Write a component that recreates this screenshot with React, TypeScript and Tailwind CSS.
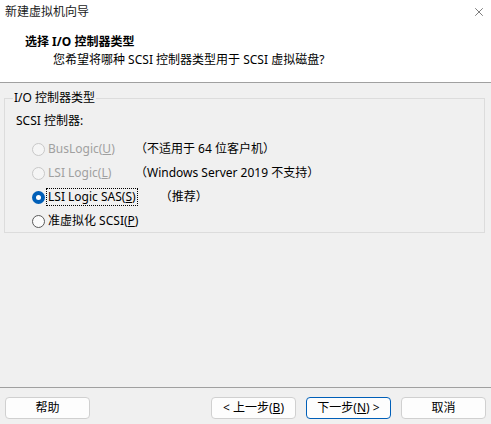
import { X } from 'lucide-react';

const font = { fontFamily: '"Segoe UI", "Noto Sans", "Noto Sans CJK SC", sans-serif' };

type Opt = { label: string; key: string; note: string; disabled?: boolean; checked?: boolean; focused?: boolean };

const options: Opt[] = [
  { label: 'BusLogic(', key: 'U', note: '（不适用于 64 位客户机）', disabled: true },
  { label: 'LSI Logic(', key: 'L', note: '（Windows Server 2019 不支持）', disabled: true },
  { label: 'LSI Logic SAS(', key: 'S', note: '（推荐）', checked: true, focused: true },
  { label: '准虚拟化 SCSI(', key: 'P', note: '' },
];

function Radio({ checked, disabled }: { checked?: boolean; disabled?: boolean }) {
  if (checked) {
    return (
      <span className="w-[13px] h-[13px] rounded-full bg-[#005fb8] flex items-center justify-center shrink-0">
        <span className="w-[5px] h-[5px] rounded-full bg-white" />
      </span>
    );
  }
  return (
    <span
      className={`w-[13px] h-[13px] rounded-full border shrink-0 ${
        disabled ? 'border-[#c8c8c8] bg-[#f5f5f5]' : 'border-[#5a5a5a] bg-[#fbfbfb]'
      }`}
    />
  );
}

function Btn({ children, primary }: { children: React.ReactNode; primary?: boolean }) {
  return (
    <button
      className={`w-[85px] h-[22px] rounded-[4px] bg-[#fdfdfd] text-[12px] text-black flex items-center justify-center border ${
        primary ? 'border-[#005fb8]' : 'border-[#d0d0d0]'
      }`}
    >
      {children}
    </button>
  );
}

export default function App() {
  return (
    <div className="w-[491px] h-[424px] flex flex-col bg-[#f0f0f0] text-[12px] text-black" style={font}>
      {/* Title + header */}
      <div className="bg-white border-b border-[#a0a0a0]">
        <div className="h-[24px] flex items-center justify-between pl-[5px] pr-[5px]">
          <span className="text-[12px] text-[#1a1a1a]">新建虚拟机向导</span>
          <X size={14} strokeWidth={1.1} className="text-[#333]" />
        </div>
        <div className="h-[58px] pt-[9px] pl-[25px]">
          <div className="font-bold text-[12px] leading-[18px]">选择 I/O 控制器类型</div>
          <div className="pl-[28px] leading-[18px]">您希望将哪种 SCSI 控制器类型用于 SCSI 虚拟磁盘?</div>
        </div>
      </div>

      {/* Body */}
      <div className="flex-1 px-[4px] pt-[7px]">
        <fieldset className="border border-[#dcdcdc] w-[481px] h-[143px] px-[10px]">
          <legend className="px-[1px] ml-[-2px] leading-[16px]">I/O 控制器类型</legend>
          <div className="pl-[1px] leading-[16px] mt-[7px]">SCSI 控制器:</div>
          <div className="flex flex-col mt-[8px] pl-[17px]">
            {options.map(o => (
              <div key={o.key} className="h-[24px] flex items-center">
                <Radio checked={o.checked} disabled={o.disabled} />
                <span
                  className={`ml-[2px] px-[1px] leading-[16px] ${o.disabled ? 'text-[#a0a0a0]' : ''} ${
                    o.focused ? 'outline outline-1 outline-dotted outline-black' : ''
                  }`}
                >
                  {o.label}
                  <span className="underline">{o.key}</span>)
                </span>
                {o.note && (
                  <span className={o.checked ? 'ml-[23px]' : 'ml-[auto] w-[339px]'}>{o.note}</span>
                )}
              </div>
            ))}
          </div>
        </fieldset>
      </div>

      {/* Footer */}
      <div className="h-[37px] border-t border-[#a0a0a0] flex items-center justify-between px-[5px] pt-[3px]">
        <Btn>帮助</Btn>
        <div className="flex gap-[10px]">
          <Btn>
            &lt; 上一步(<span className="underline">B</span>)
          </Btn>
          <Btn primary>
            下一步(<span className="underline">N</span>) &gt;
          </Btn>
          <Btn>取消</Btn>
        </div>
      </div>
    </div>
  );
}
